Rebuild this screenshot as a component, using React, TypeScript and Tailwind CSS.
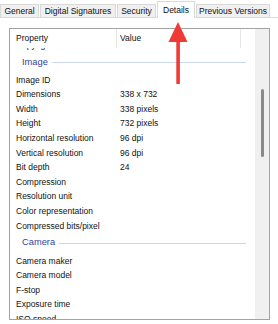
const tabs = [
  { label: 'General', w: 'w-[39px]' },
  { label: 'Digital Signatures', w: 'w-[76px]' },
  { label: 'Security', w: 'w-[39px]' },
  { label: 'Details', w: 'w-[38px]', active: true },
  { label: 'Previous Versions', w: 'w-[74px]' },
];

type Row = { group?: string; name?: string; value?: string };

const rows: Row[] = [
  { name: 'Copyright' },
  { group: 'Image' },
  { name: 'Image ID' },
  { name: 'Dimensions', value: '338 x 732' },
  { name: 'Width', value: '338 pixels' },
  { name: 'Height', value: '732 pixels' },
  { name: 'Horizontal resolution', value: '96 dpi' },
  { name: 'Vertical resolution', value: '96 dpi' },
  { name: 'Bit depth', value: '24' },
  { name: 'Compression' },
  { name: 'Resolution unit' },
  { name: 'Color representation' },
  { name: 'Compressed bits/pixel' },
  { group: 'Camera' },
  { name: 'Camera maker' },
  { name: 'Camera model' },
  { name: 'F-stop' },
  { name: 'Exposure time' },
  { name: 'ISO speed' },
];

export default function App() {
  return (
    <div className="relative w-[278px] h-[324px] overflow-hidden bg-white text-[8.5px] text-[#111] font-['Liberation_Sans',Arial,sans-serif]">
      {/* tab strip */}
      <div className="flex items-end gap-px h-[18px] border-b border-[#d9d9d9]">
        {tabs.map((t) =>
          t.active ? (
            <div
              key={t.label}
              className={`${t.w} h-[17px] -mb-px flex items-center justify-center bg-white border border-b-0 border-[#d9d9d9] z-10`}
            >
              {t.label}
            </div>
          ) : (
            <div
              key={t.label}
              className={`${t.w} h-[13px] flex items-center justify-center bg-[#f0f0f0] border border-b-0 border-[#d9d9d9] whitespace-nowrap`}
            >
              {t.label}
            </div>
          )
        )}
      </div>

      {/* details panel */}
      <div className="pt-[10px] pl-[9px]">
        <div className="flex w-[261px] h-[292px] border border-[#a3a3a3] bg-white">
          <div className="flex flex-col flex-1 min-w-0">
            <div className="relative z-10 flex h-[19px] shrink-0 bg-white">
              <div className="w-[107px] pl-[6px] flex items-center border-r border-[#e5e5e5]">Property</div>
              <div className="w-[124px] pl-[3px] flex items-center border-r border-[#e5e5e5]">Value</div>
            </div>
            <div className="flex-1 overflow-hidden">
              {/* list is scrolled, so the last Origin row sits mostly under the header */}
              <div className="-mt-[10.3px]">
                {rows.map((r, i) =>
                  r.group ? (
                    <div key={i} className="flex items-center h-[20.4px] pl-[12px] pr-[9px]">
                      <span className="text-[9.3px] text-[#2f45a0]">{r.group}</span>
                      <div className="flex-1 h-px ml-[4px] bg-[#c9d7ef]" />
                    </div>
                  ) : (
                    <div key={i} className="flex items-center h-[14.6px] whitespace-nowrap">
                      <div className="w-[106px] pl-[6px]">{r.name}</div>
                      <div className="pl-[4px]">{r.value}</div>
                    </div>
                  )
                )}
              </div>
            </div>
          </div>
          <div className="w-[14px] bg-[#f0f0f0] flex flex-col items-center pt-[60px]">
            <div className="w-[3px] h-[68px] rounded-full bg-[#8a8a8a]" />
          </div>
        </div>
      </div>

      {/* annotation arrow */}
      <svg className="absolute left-0 top-0 z-20" width="278" height="100" viewBox="0 0 278 100">
        <polygon points="178,22 187.5,42 168.5,42" fill="#ef3b36" />
        <rect x="176.3" y="40" width="3.6" height="44" fill="#ef3b36" />
      </svg>
    </div>
  );
}
